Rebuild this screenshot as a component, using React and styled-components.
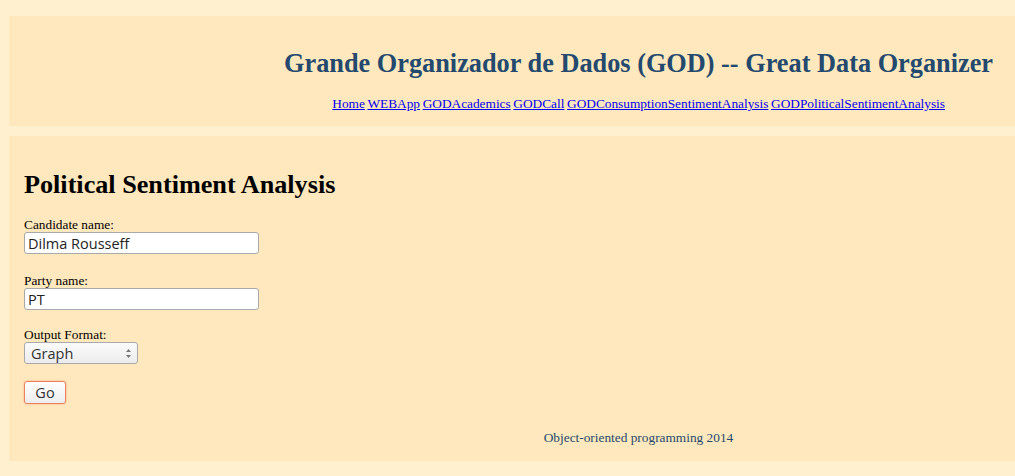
import React from "react";
import styled, { createGlobalStyle } from "styled-components";

const GlobalStyle = createGlobalStyle`
  body {
    margin: 0;
    background: #fff0d0;
    font-family: "Liberation Serif", "Times New Roman", serif;
  }
`;

const Page = styled.div`
  padding: 16px 0 15px 9px;
  display: flex;
  flex-direction: column;
  gap: 10px;
`;

const Panel = styled.div`
  background: #ffe8bd;
  height: ${(p) => p.h}px;
  box-sizing: border-box;
`;

const Header = styled(Panel)`
  display: flex;
  flex-direction: column;
  align-items: flex-end;
  padding: 30px 22px 0 0;
`;

const Title = styled.h1`
  margin: 0;
  font-size: 26.3px;
  line-height: 36px;
  font-weight: bold;
  color: #234a6e;
`;

const Nav = styled.nav`
  margin-top: 14px;
  padding-right: 48px;
  font-size: 13.33px;
  line-height: 16px;
  display: flex;
  gap: 2.6px;

  a {
    color: #0000ee;
    text-decoration: underline;
  }
`;

const Content = styled(Panel)`
  padding: 33px 0 0 15px;
  display: flex;
  flex-direction: column;
`;

const Heading = styled.h2`
  margin: 0 0 16px;
  font-size: 26.2px;
  line-height: 32px;
  font-weight: bold;
  color: #000;
`;

const Field = styled.div`
  display: flex;
  flex-direction: column;
  align-items: flex-start;
  margin-bottom: ${(p) => p.gap || 17}px;
`;

const Label = styled.label`
  font-size: 13.33px;
  line-height: 15px;
  color: #000;
`;

const TextInput = styled.input`
  width: 235px;
  height: 22px;
  box-sizing: border-box;
  margin: 0;
  padding: 0 3px;
  border: 1px solid #a9a9a9;
  border-radius: 3px;
  background: #fff;
  font-family: "Open Sans", "DejaVu Sans", sans-serif;
  font-size: 14.5px;
  color: #222;
  outline: none;
`;

const Select = styled.div`
  width: 114px;
  height: 22px;
  box-sizing: border-box;
  border: 1px solid #a9a9a9;
  border-radius: 3px;
  background: linear-gradient(#fbfbfb, #ececec);
  display: flex;
  align-items: center;
  justify-content: space-between;
  padding: 0 5px 0 6px;
  font-family: "Open Sans", "DejaVu Sans", sans-serif;
  font-size: 14.5px;
  color: #333;
`;

const Arrows = styled.svg`
  width: 7px;
  height: 11px;
`;

const GoButton = styled.button`
  appearance: none;
  width: 42px;
  height: 23px;
  margin: 0;
  padding: 0;
  border: 1px solid #ec7f5c;
  border-radius: 3px;
  background: linear-gradient(#ffffff, #ededed);
  font-family: "Open Sans", "DejaVu Sans", sans-serif;
  font-size: 14.5px;
  color: #333;
  box-shadow: 0 0 2px #f4a080;
`;

const Footer = styled.div`
  margin-top: 26px;
  padding-left: 238px;
  text-align: center;
  font-size: 13.33px;
  line-height: 16px;
  color: #234a6e;
`;

const links = [
  "Home",
  "WEBApp",
  "GODAcademics",
  "GODCall",
  "GODConsumptionSentimentAnalysis",
  "GODPoliticalSentimentAnalysis",
];

export default function App() {
  return (
    <>
      <GlobalStyle />
      <Page>
        <Header h={110}>
          <Title>Grande Organizador de Dados (GOD) -- Great Data Organizer</Title>
          <Nav>
            {links.map((l) => (
              <a key={l} href="#">{l}</a>
            ))}
          </Nav>
        </Header>
        <Content h={325}>
          <Heading>Political Sentiment Analysis</Heading>
          <Field gap={19}>
            <Label>Candidate name:</Label>
            <TextInput defaultValue="Dilma Rousseff" />
          </Field>
          <Field>
            <Label>Party name:</Label>
            <TextInput defaultValue="PT" />
          </Field>
          <Field>
            <Label>Output Format:</Label>
            <Select>
              <span>Graph</span>
              <Arrows viewBox="0 0 7 11">
                <path d="M1 4 L3.5 1 L6 4 Z" fill="#777" />
                <path d="M1 7 L3.5 10 L6 7 Z" fill="#777" />
              </Arrows>
            </Select>
          </Field>
          <div>
            <GoButton>Go</GoButton>
          </div>
          <Footer>Object-oriented programming 2014</Footer>
        </Content>
      </Page>
    </>
  );
}
